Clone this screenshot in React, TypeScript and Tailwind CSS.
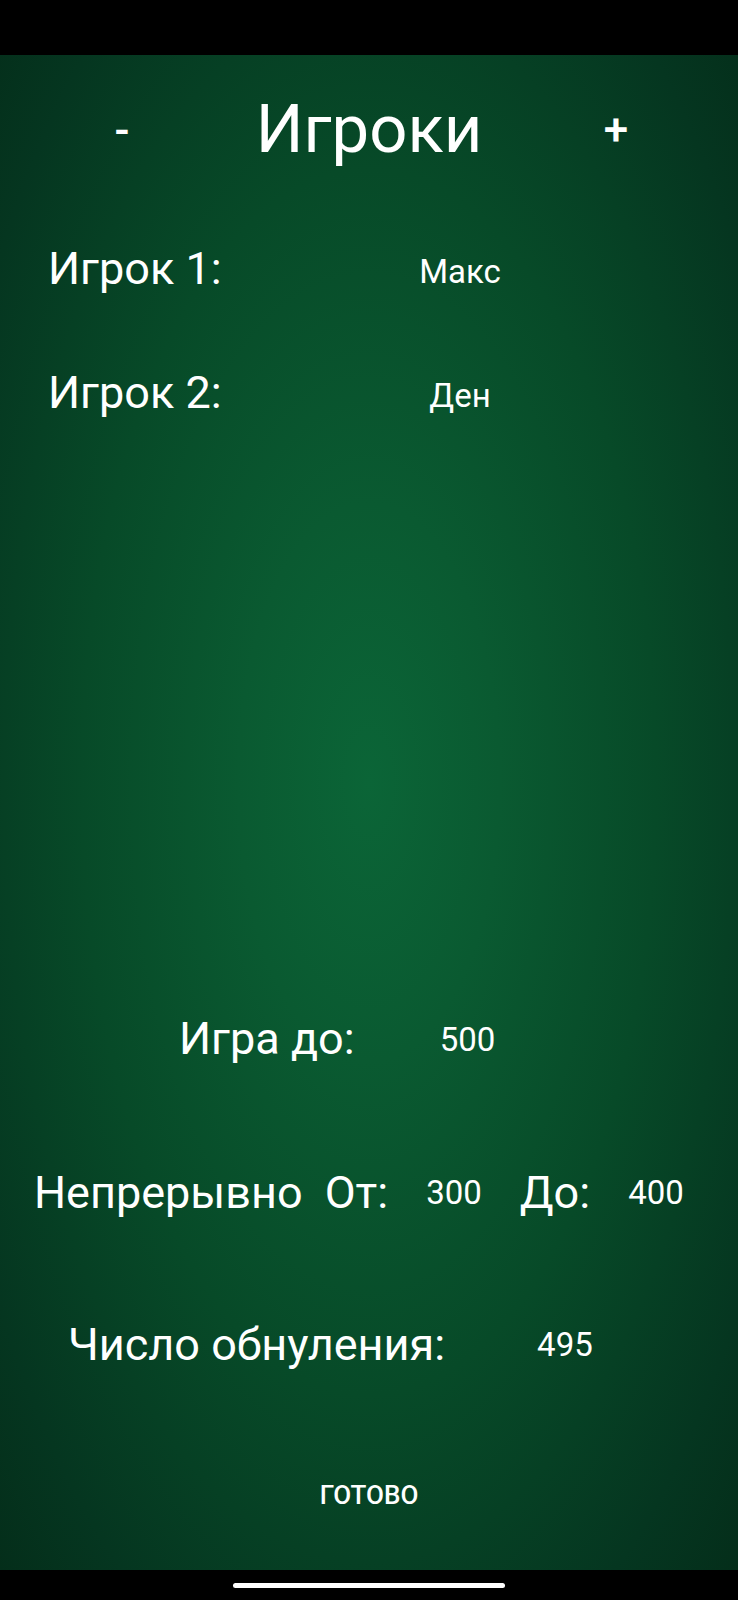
import React from 'react';

type Player = { id: number; name: string };

const players: Player[] = [
  { id: 1, name: 'Макс' },
  { id: 2, name: 'Ден' },
];

// Экран настройки игроков и правил партии
const App: React.FC = () => {
  return (
    <div className="flex h-[1600px] w-[738px] flex-col bg-black font-['Roboto',sans-serif] text-white">
      {/* status bar */}
      <div className="h-[55px] shrink-0 bg-black" />

      <main className="flex flex-1 flex-col bg-[radial-gradient(ellipse_at_50%_48%,#0b6537_0%,#0a5a31_25%,#074a28_55%,#053620_85%,#042e1a_100%)]">
        {/* Header */}
        <div className="grid h-[152px] grid-cols-[244px_250px_244px] items-center pb-[3px]">
          <button className="text-center text-[44px] font-medium leading-none">-</button>
          <h1 className="text-center text-[67px] leading-none">Игроки</h1>
          <button className="text-center text-[44px] font-medium leading-none">+</button>
        </div>

        {/* Players */}
        {players.map((p) => (
          <div key={p.id} className="flex h-[124px] items-center pb-[2px]">
            <div className="w-[340px] pl-[48px] text-[45px] leading-none">Игрок {p.id}:</div>
            <div className="w-[240px] pt-[6px] text-center text-[33px] leading-none">{p.name}</div>
          </div>
        ))}

        {/* Settings */}
        <div className="mt-auto flex flex-col">
          <div className="flex h-[152px] items-center pb-[3px] pl-[179px]">
            <span className="text-[45px] leading-none">Игра до:</span>
            <span className="ml-[85px] pt-[2px] text-[33px] leading-none">500</span>
          </div>

          <div className="flex h-[152px] items-center pl-[34px]">
            <span className="text-[45px] leading-none">Непрерывно</span>
            <span className="ml-[22px] text-[45px] leading-none">От:</span>
            <span className="ml-[38px] text-[33px] leading-none">300</span>
            <span className="ml-[38px] text-[45px] leading-none">До:</span>
            <span className="ml-[38px] text-[33px] leading-none">400</span>
          </div>

          <div className="flex h-[152px] items-center pl-[68px]">
            <span className="text-[45px] leading-none">Число обнуления:</span>
            <span className="ml-[92px] text-[33px] leading-none">495</span>
          </div>

          <div className="flex h-[150px] items-center justify-center">
            <button className="text-[26px] font-medium uppercase leading-none">Готово</button>
          </div>
        </div>
      </main>

      {/* navigation bar */}
      <div className="flex h-[30px] shrink-0 items-center justify-center bg-black">
        <div className="h-[5px] w-[272px] rounded-full bg-white" />
      </div>
    </div>
  );
};

export default App;
